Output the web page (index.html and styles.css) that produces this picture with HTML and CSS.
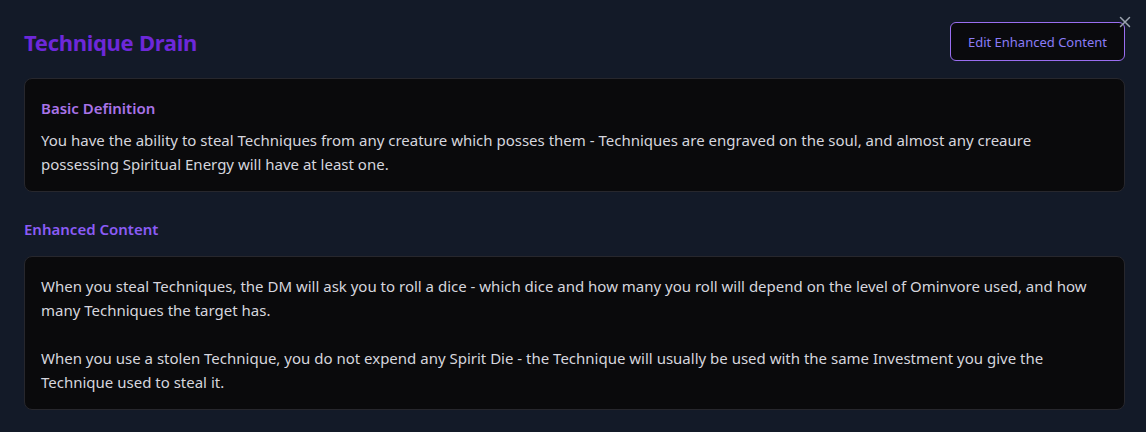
FILE: index.html
```html
<!DOCTYPE html>
<html>
<head>
<meta charset="utf-8">
<link rel="stylesheet" href="styles.css">
</head>
<body>
<div class="panel">
  <button class="close" aria-label="Close">
    <svg width="12" height="12" viewBox="0 0 12 12"><path d="M1.5 1.5 L10.5 10.5 M10.5 1.5 L1.5 10.5" stroke="#9ca3af" stroke-width="1.5" stroke-linecap="round"/></svg>
  </button>
  <header class="head">
    <h1 class="title">Technique Drain</h1>
    <button class="edit-btn">Edit Enhanced Content</button>
  </header>
  <section class="card">
    <h2 class="card-title">Basic Definition</h2>
    <p class="text">You have the ability to steal Techniques from any creature which posses them - Techniques are engraved on the soul, and almost any creaure possessing Spiritual Energy will have at least one.</p>
  </section>
  <h2 class="section-title">Enhanced Content</h2>
  <section class="card">
    <p class="text">When you steal Techniques, the DM will ask you to roll a dice - which dice and how many you roll will depend on the level of Ominvore used, and how many Techniques the target has.</p>
    <p class="text gap">When you use a stolen Technique, you do not expend any Spirit Die - the Technique will usually be used with the same Investment you give the Technique used to steal it.</p>
  </section>
</div>
</body>
</html>
```
FILE: styles.css
```css
html, body {
  margin: 0;
  padding: 0;
  background: #131a28;
  font-family: "Noto Sans", "Open Sans", sans-serif;
}
.panel {
  position: relative;
  padding: 22px 21px 22px 24px;
}
.close {
  position: absolute;
  top: 15px;
  right: 14px;
  width: 14px;
  height: 14px;
  padding: 0;
  border: 0;
  background: transparent;
  display: flex;
  align-items: center;
  justify-content: center;
}
.head {
  display: flex;
  justify-content: space-between;
  align-items: center;
  height: 39px;
  margin-bottom: 17px;
}
.title {
  margin: 0;
  font-size: 22px;
  font-weight: 700;
  color: #6d28d9;
  letter-spacing: -0.3px;
}
.edit-btn {
  height: 39px;
  padding: 0 17px;
  background: #0a0a0d;
  border: 1px solid #9a6ef0;
  border-radius: 6px;
  color: #8b7cf6;
  font-family: inherit;
  font-size: 13px;
}
.card {
  background: #0a0a0c;
  border: 1px solid #27272d;
  border-radius: 8px;
  padding: 17px 16px 15px;
}
.card-title {
  margin: 0 0 8px;
  font-size: 15px;
  font-weight: 600;
  color: #a873e8;
  line-height: 24px;
}
.section-title {
  margin: 25px 0 15px;
  font-size: 15px;
  font-weight: 600;
  color: #8b5cf6;
  line-height: 24px;
}
.text {
  margin: 0;
  font-size: 15px;
  line-height: 24px;
  color: #d6d6de;
}
.gap {
  margin-top: 24px;
}
```
